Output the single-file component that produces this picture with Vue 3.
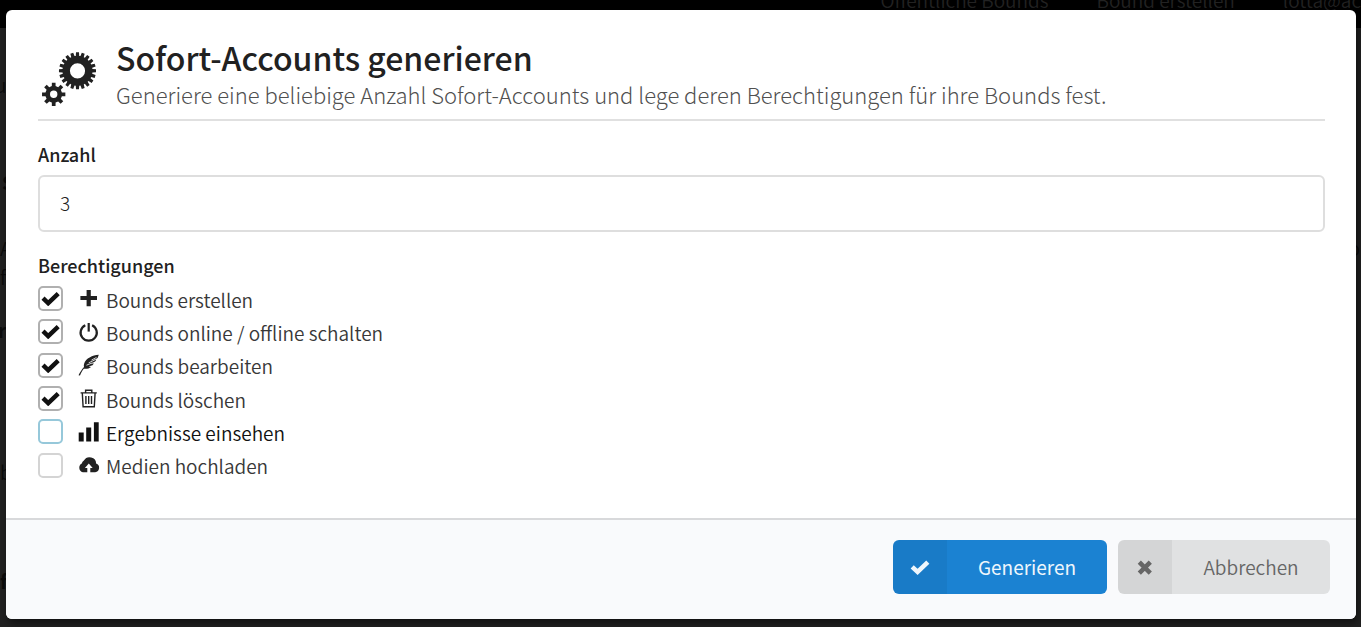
<script setup>
import { ref } from 'vue'

const amount = ref('3')
const permissions = ref([
  { id: 'create', label: 'Bounds erstellen', icon: 'plus', on: true },
  { id: 'toggle', label: 'Bounds online / offline schalten', icon: 'power', on: true },
  { id: 'edit', label: 'Bounds bearbeiten', icon: 'feather', on: true },
  { id: 'delete', label: 'Bounds löschen', icon: 'trash', on: true },
  { id: 'results', label: 'Ergebnisse einsehen', icon: 'bars', on: false, active: true },
  { id: 'upload', label: 'Medien hochladen', icon: 'cloud', on: false }
])

// Outline of a cog wheel with a round hole in its centre
function gear(cx, cy, outer, root, hole, teeth, half) {
  const step = (Math.PI * 2) / teeth
  const at = (r, a) => `${(cx + r * Math.sin(a)).toFixed(2)} ${(cy - r * Math.cos(a)).toFixed(2)}`
  let d = ''
  for (let i = 0; i < teeth; i++) {
    const a = i * step
    const b = step * half
    d += `${i ? 'L' : 'M'}${at(root, a - b * 1.15)}L${at(outer, a - b * 0.8)}L${at(outer, a + b * 0.8)}L${at(root, a + b * 1.15)}`
  }
  return `${d}ZM${cx - hole} ${cy}a${hole} ${hole} 0 1 0 ${hole * 2} 0a${hole} ${hole} 0 1 0 ${-hole * 2} 0Z`
}
const bigGear = gear(35.5, 18.8, 18.6, 15, 7.6, 20, 0.32)
const smallGear = gear(11.7, 42.3, 11.8, 8.4, 3.7, 8, 0.25)
</script>

<template>
  <div class="page">
    <div class="backdrop" aria-hidden="true">
      <div class="topbar">
        <span>Öffentliche Bounds</span>
        <span>Bound erstellen</span>
        <span>lotta@ac</span>
      </div>
      <span class="edge edge-u">u</span>
      <span class="edge edge-s">S</span>
      <span class="edge edge-a">A</span>
      <span class="edge edge-f">f</span>
      <span class="edge edge-r">r</span>
      <span class="edge edge-b">b</span>
      <span class="edge edge-fe">f</span>
      <span class="edge edge-o">o</span>
    </div>

    <form class="modal" role="dialog" aria-labelledby="title" @submit.prevent>
      <div class="content">
        <header class="header">
          <svg class="gears" viewBox="0 0 54 54" aria-hidden="true">
            <path :d="bigGear" fill-rule="evenodd" />
            <path :d="smallGear" fill-rule="evenodd" />
          </svg>
          <div>
            <h1 id="title">Sofort-Accounts generieren</h1>
            <p>Generiere eine beliebige Anzahl Sofort-Accounts und lege deren Berechtigungen für ihre Bounds fest.</p>
          </div>
        </header>

        <label class="caption" for="amount">Anzahl</label>
        <input id="amount" v-model="amount" class="amount" type="text" inputmode="numeric" />

        <fieldset class="permissions">
          <legend class="caption">Berechtigungen</legend>
          <div class="rows">
            <label v-for="p in permissions" :key="p.id" class="row" :class="{ active: p.active }" :for="p.id">
              <span class="box">
                <input :id="p.id" v-model="p.on" type="checkbox" />
                <svg v-if="p.on" class="tick" viewBox="0 0 19 15" aria-hidden="true">
                  <path d="M2 7.2 7.2 12.2 17.2 2.6" />
                </svg>
              </span>
              <svg class="icon" viewBox="0 0 22 22" aria-hidden="true">
                <path v-if="p.icon === 'plus'" d="M8.6 2h4.2v6.1H19v4h-6.200v6.100H8.600v-6.100H2.400v-4h6.200z" />
                <g v-else-if="p.icon === 'power'" class="line thick">
                  <path d="M7.300 4.200a8.100 8.100 0 1 0 6.800 0" />
                  <path d="M10.700 2v8.600" />
                </g>
                <g v-else-if="p.icon === 'feather'">
                  <path d="M20.800.700C14.500 1.200 7.800 4.200 6.100 9.700c-.3 1-.4 2.200-.1 3.200C3.900 15.200 2 18.200.5 21.200l1.500.4c.9-2.500 2.200-4.900 3.800-6.900 2.500.3 5.500-.1 7.300-1.800l-2.500-.3 3.900-1.400 1.400-1.800-2.800.1 4-1.900 1.200-1.900-2.400.2 3.700-1.800z" />
                  <path class="vein" d="M8.500 11.200l5.800-2.300M10.700 8.800l6.300-3M13.500 6.100l5-2.700" />
                </g>
                <g v-else-if="p.icon === 'trash'" class="line thin">
                  <path d="M2.600 4.900h16.200M7.600 4.700V2.300h6.200v2.400M4.300 5l.8 13.700h11.200L17.100 5M7.900 7.900v8M10.700 7.900v8M13.500 7.900v8" />
                </g>
                <path v-else-if="p.icon === 'bars'" d="M.700 11.500h5v9H.700zM8.200 6.500h5v14h-5zM15.900 1.300h4.800v19.200h-4.800z" />
                <path
                  v-else
                  fill-rule="evenodd"
                  d="M18.100 9.500A6.500 6.300 0 0 0 5.900 6.500a4.800 4.700 0 0 0-2.100 3A4.700 4.700 0 0 0 4.800 18.200h4.500v-4.300H6.900l3.900-4.300 3.900 4.300h-2.400v4.300h4.900a4.500 4.500 0 0 0 .9-8.700z"
                />
              </svg>
              <span class="text">{{ p.label }}</span>
            </label>
          </div>
        </fieldset>
      </div>

      <footer class="actions">
        <button class="button primary" type="submit">
          <span class="badge">
            <svg viewBox="0 0 20 16" aria-hidden="true"><path d="M2.200 7.800 7.600 12.900 17.800 3.100" /></svg>
          </span>
          <span class="button-text">Generieren</span>
        </button>
        <button class="button" type="button">
          <span class="badge">
            <svg viewBox="0 0 20 16" aria-hidden="true"><path d="M4.300 3.200 15.300 14.200M15.300 3.200 4.300 14.200" /></svg>
          </span>
          <span class="button-text">Abbrechen</span>
        </button>
      </footer>
    </form>
  </div>
</template>

<style>
body {
  background: #212121;
}
</style>

<style scoped>
.page {
  position: relative;
  box-sizing: border-box;
  min-height: 100vh;
  padding: 10px 5px 8px 6px;
  overflow: hidden;
  color: #212121;
  font-family: "Noto Sans CJK SC", "Noto Sans", sans-serif;
  font-size: 19px;
  font-weight: 350;
}
.backdrop {
  position: absolute;
  inset: 0;
  overflow: hidden;
  color: #0b0b0b;
}
.topbar {
  display: flex;
  justify-content: flex-end;
  gap: 48px;
  box-sizing: border-box;
  height: 28px;
  background: #000;
  color: #222;
  font-weight: 350;
  line-height: 0;
}
.edge {
  position: absolute;
  left: 0;
  line-height: 24px;
}
.edge-u { top: 73px; left: -5px; }
.edge-s { top: 170px; left: 2px; font-weight: 700; }
.edge-a { top: 236px; }
.edge-f { top: 265px; }
.edge-r { top: 318px; left: -2px; font-weight: 700; }
.edge-b { top: 460px; }
.edge-fe { top: 569px; font-weight: 700; }
.edge-o { top: 236px; left: auto; right: 1px; }

.modal {
  position: relative;
  border-radius: 6px;
  background: #fff;
  box-shadow: 2px 4px 8px rgba(0, 0, 0, 0.5);
  overflow: hidden;
}
.content {
  padding: 32px 31px 36px 32px;
}
.header {
  display: flex;
  align-items: center;
  gap: 20px;
  padding-bottom: 8px;
  border-bottom: 2px solid #e0e0e0;
}
.gears {
  width: 54px;
  height: 54px;
  margin: 4px 0 0 4px;
  fill: #212121;
}
h1 {
  margin: 0 0 6px;
  font-size: 32px;
  font-weight: 500;
  line-height: 30px;
}
p {
  margin: 0;
  color: #505050;
  font-size: 22px;
  font-weight: 300;
  line-height: 33px;
}
.caption {
  display: block;
  padding: 0;
  font-size: 18px;
  font-weight: 500;
  line-height: 24px;
}
.header + .caption {
  margin-top: 21px;
}
.amount {
  display: block;
  box-sizing: border-box;
  width: 100%;
  height: 57px;
  margin: 9px 0 21px;
  padding: 0 20px 2px;
  border: 2px solid #dedede;
  border-radius: 6px;
  background: #fff;
  color: #212121;
  font: inherit;
  font-weight: 300;
}
.permissions {
  margin: 0;
  padding: 0;
  border: 0;
}
.rows {
  display: grid;
  grid-auto-rows: 1fr;
  height: 200px;
  margin-top: 5px;
}
.row {
  display: flex;
  align-items: center;
  justify-self: start;
  color: #383838;
}
.row.active {
  color: #111;
}
.box {
  display: grid;
  place-items: center;
  width: 25px;
  height: 25px;
}
.box > * {
  grid-area: 1 / 1;
}
.box input {
  appearance: none;
  box-sizing: border-box;
  width: 25px;
  height: 25px;
  margin: 0;
  border: 2px solid #d4d4d4;
  border-radius: 5px;
  background: #fff;
}
.box input:checked {
  border-color: #b0b0b0;
}
.active .box input {
  border-color: #96c8da;
}
.tick {
  z-index: 1;
  width: 19px;
  height: 15px;
  fill: none;
  stroke: #111;
  stroke-width: 4.4;
  pointer-events: none;
}
.icon {
  width: 22px;
  height: 22px;
  margin: 0 6px 0 15px;
  fill: #212121;
  overflow: visible;
}
.active .icon {
  fill: #111;
}
.line {
  fill: none;
  stroke: #212121;
}
.thick { stroke-width: 2.2; }
.thin { stroke-width: 1.4; }
.vein {
  fill: none;
  stroke: #fff;
  stroke-width: 0.8;
}
.text {
  padding-top: 2px;
  line-height: 28px;
}
.actions {
  display: flex;
  justify-content: flex-end;
  gap: 11px;
  padding: 20px 26px 25px;
  border-top: 2px solid #d8d9db;
  background: #f9fafc;
}
.button {
  display: flex;
  width: 212px;
  height: 54px;
  padding: 0;
  overflow: hidden;
  border: 0;
  border-radius: 6px;
  background: #e0e1e2;
  color: #666;
  font: inherit;
}
.primary {
  width: 214px;
  background: #1b82d2;
  color: #eef6fc;
  font-weight: 400;
}
.badge {
  display: grid;
  place-items: center;
  flex: none;
  width: 54px;
  height: 54px;
  background: rgba(0, 0, 0, 0.05);
}
.badge svg {
  width: 20px;
  height: 16px;
  fill: none;
  stroke: currentColor;
  stroke-width: 4.5;
}
.button-text {
  flex: 1;
  line-height: 54px;
}
</style>
